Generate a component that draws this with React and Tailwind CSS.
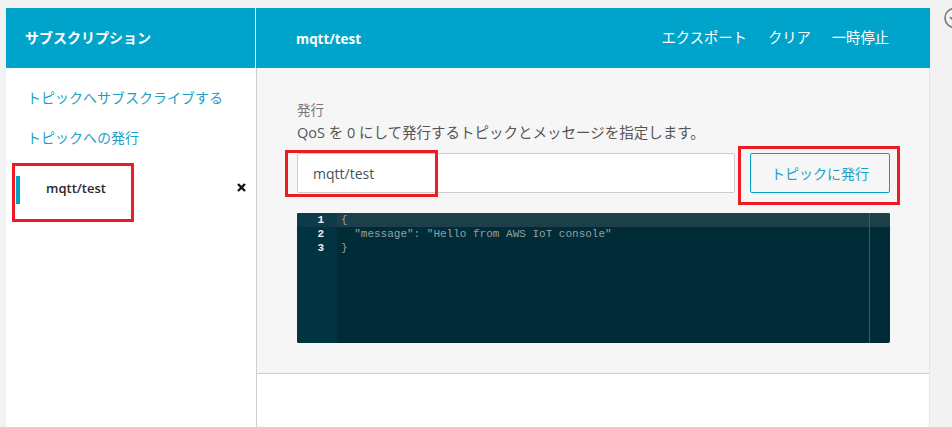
import React from 'react';

const App = () => {
  return (
    <div className="relative h-[427px] w-[952px] overflow-hidden bg-[#f2f2f2] pl-[6px] pt-2 font-['Open_Sans','Noto_Sans_CJK_JP',sans-serif]">
      <div className="flex h-[419px] w-[924px] bg-white">
        {/* Sidebar */}
        <div className="w-[249px] shrink-0">
          <div className="flex h-[60px] items-center bg-[#00a4ca] pb-[1px] pl-[19px] text-[14px] font-bold text-white">
            サブスクリプション
          </div>
          <div className="pt-[19px] text-[14px] text-[#1b9fc4]">
            <div className="flex h-5 items-center pl-[21px]">トピックへサブスクライブする</div>
            <div className="mt-5 flex h-5 items-center pl-[21px]">トピックへの発行</div>
          </div>
          <div className="mt-[29px] flex h-[28px] items-center pl-[10px] pr-[9px]">
            <div className="h-[28px] w-1 bg-[#00a4ca]" />
            <div className="mb-[3px] ml-[26px] flex-1 text-[13px] font-semibold text-[#2a2a2a]">mqtt/test</div>
            <svg width="9" height="9" viewBox="0 0 9 9" className="mb-[6px]">
              <path d="M1 1 L8 8 M8 1 L1 8" stroke="#111" strokeWidth="2.4" />
            </svg>
          </div>
        </div>

        {/* Main */}
        <div className="flex-1 border-l border-white">
          <div className="flex h-[60px] items-center justify-between bg-[#00a4ca] pl-10 pr-[41px] text-white">
            <div className="mt-[2px] text-[13.4px] font-bold">mqtt/test</div>
            <div className="flex gap-[21px] text-[14.3px]">
              <span>エクスポート</span>
              <span>クリア</span>
              <span>一時停止</span>
            </div>
          </div>
          <div className="h-[359px] border-x border-l-[#cfcfcf] border-r-[#e6e6e6]">
            <div className="h-[306px] border-b border-[#cccccc] bg-[#f6f6f6] pl-10 pt-[33px]">
              <div className="text-[13.5px] leading-[18px] text-[#777]">発行</div>
              <div className="mt-[5px] text-[14.5px] leading-[18px] text-[#555]">
                QoS を 0 にして発行するトピックとメッセージを指定します。
              </div>
              <div className="mt-[11px] flex gap-[15px]">
                <div className="flex h-10 w-[438px] items-center rounded-[2px] border border-[#cccccc] bg-white pl-[15px] text-[14px] text-[#44525c]">
                  mqtt/test
                </div>
                <div className="flex h-10 w-[140px] items-center justify-center rounded-[2px] border border-[#00a4ca] text-[14px] text-[#1b9fc4]">
                  トピックに発行
                </div>
              </div>
              {/* Editor */}
              <div className="relative mt-5 flex h-[130px] w-[593px] overflow-hidden rounded-[2px] bg-[#002b37] font-['Liberation_Mono',monospace] text-[11px] leading-[14px]">
                <div className="w-10 shrink-0 bg-[#023340] text-right text-[#e4eef0]">
                  <div className="bg-[#0f3a49] pr-[13px] font-bold">1</div>
                  <div className="pr-[13px] font-bold">2</div>
                  <div className="pr-[13px] font-bold">3</div>
                </div>
                <div className="flex-1 text-[#93a1a1]">
                  <div className="bg-[#1c3f4a] pl-1">{'{'}</div>
                  <div className="whitespace-pre pl-1">{'  "message": "Hello from AWS IoT console"'}</div>
                  <div className="pl-1">{'}'}</div>
                </div>
                <div className="absolute inset-y-0 left-[572px] w-px bg-[#3f5c64]" />
              </div>
            </div>
          </div>
        </div>
      </div>

      {/* Red annotation boxes */}
      <div className="absolute left-[12px] top-[163px] h-[59px] w-[122px] border-[3px] border-[#ed1c24]" />
      <div className="absolute left-[285px] top-[150px] h-[47px] w-[153px] border-[3px] border-[#ed1c24]" />
      <div className="absolute left-[738px] top-[146px] h-[59px] w-[162px] border-[3px] border-[#ed1c24]" />

      {/* Cut-off circle icon at the right edge */}
      <svg width="22" height="22" viewBox="0 0 22 22" className="absolute left-[944px] top-[8px]">
        <circle cx="10.5" cy="10" r="9.5" fill="none" stroke="#777" strokeWidth="1.6" />
        <path d="M6 9 L10.5 13.5 L15 9" fill="none" stroke="#777" strokeWidth="1.6" />
      </svg>
    </div>
  );
};

export default App;
